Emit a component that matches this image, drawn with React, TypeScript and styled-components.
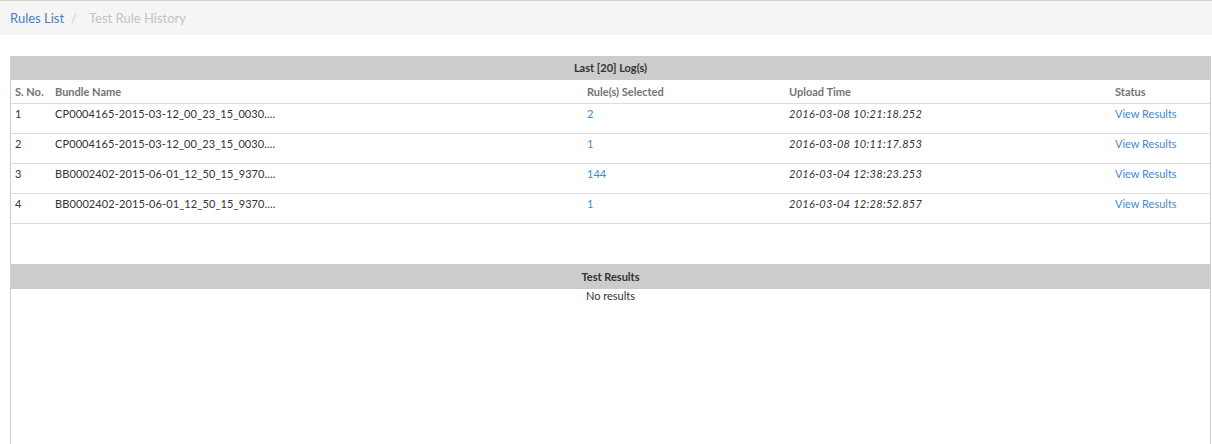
import React from "react";
import styled, { createGlobalStyle } from "styled-components";

const GlobalStyle = createGlobalStyle`
  html, body {
    margin: 0;
    padding: 0;
    background: #ffffff;
  }
  body {
    font-family: Lato, "Open Sans", "Liberation Sans", sans-serif;
    font-size: 11px;
    color: #333333;
  }
  * { box-sizing: border-box; }
`;

const Page = styled.div`
  display: flex;
  flex-direction: column;
`;

const Breadcrumb = styled.nav`
  display: flex;
  align-items: center;
  height: 35px;
  padding: 0 10px 1px;
  border-top: 1px solid #cfcfcf;
  background: #f5f5f5;
  font-size: 13px;
  line-height: 20px;
`;

const CrumbLink = styled.a`
  color: #4a7fc1;
  text-decoration: none;
`;

const CrumbSep = styled.span`
  color: #cccccc;
  margin: 0 12px 0 7px;
`;

const CrumbActive = styled.span`
  color: #c4c4c4;
`;

const Content = styled.main`
  padding: 21px 1px 0 10px;
`;

const Panel = styled.div`
  display: flex;
  flex-direction: column;
  min-height: 400px;
  border-left: 1px solid #cccccc;
  border-right: 1px solid #cccccc;
`;

const Bar = styled.div<{ $h: number }>`
  height: ${(p) => p.$h}px;
  line-height: ${(p) => p.$h}px;
  background: #cccccc;
  color: #333333;
  font-weight: 700;
  text-align: center;
`;

const Row = styled.div<{ $head?: boolean }>`
  display: grid;
  grid-template-columns: 40px 532px 202px 326px 1fr;
  height: ${(p) => (p.$head ? 24 : 30)}px;
  align-items: ${(p) => (p.$head ? "center" : "start")};
  padding-top: ${(p) => (p.$head ? 0 : 2)}px;
  border-bottom: 1px solid #dddddd;
  line-height: 16px;
`;

const HeadCell = styled.div`
  padding-left: 4px;
  color: #737373;
  font-weight: 700;
`;

const Cell = styled.div<{ $kind?: "name" | "time" | "link" }>`
  padding-left: 4px;
  white-space: nowrap;
  color: ${(p) => (p.$kind === "link" ? "#3f8ad0" : "#333333")};
  font-style: ${(p) => (p.$kind === "time" ? "italic" : "normal")};
  letter-spacing: ${(p) =>
    p.$kind === "name" ? "0.1px" : p.$kind === "time" ? "0.3px" : "0"};
`;

const Spacer = styled.div`
  height: 40px;
`;

const Empty = styled.div`
  text-align: center;
  line-height: 13px;
  color: #333333;
`;

const logs = [
  { no: 1, name: "CP0004165-2015-03-12_00_23_15_0030....", rules: "2", time: "2016-03-08 10:21:18.252" },
  { no: 2, name: "CP0004165-2015-03-12_00_23_15_0030....", rules: "1", time: "2016-03-08 10:11:17.853" },
  { no: 3, name: "BB0002402-2015-06-01_12_50_15_9370....", rules: "144", time: "2016-03-04 12:38:23.253" },
  { no: 4, name: "BB0002402-2015-06-01_12_50_15_9370....", rules: "1", time: "2016-03-04 12:28:52.857" },
];

export default function App() {
  return (
    <Page>
      <GlobalStyle />
      <Breadcrumb>
        <CrumbLink href="#">Rules List</CrumbLink>
        <CrumbSep>/</CrumbSep>
        <CrumbActive>Test Rule History</CrumbActive>
      </Breadcrumb>
      <Content>
        <Panel>
          <Bar $h={24}>Last [20] Log(s)</Bar>
          <Row $head>
            <HeadCell>S. No.</HeadCell>
            <HeadCell>Bundle Name</HeadCell>
            <HeadCell>Rule(s) Selected</HeadCell>
            <HeadCell>Upload Time</HeadCell>
            <HeadCell>Status</HeadCell>
          </Row>
          {logs.map((l) => (
            <Row key={l.no}>
              <Cell>{l.no}</Cell>
              <Cell $kind="name">{l.name}</Cell>
              <Cell $kind="link">{l.rules}</Cell>
              <Cell $kind="time">{l.time}</Cell>
              <Cell $kind="link">View Results</Cell>
            </Row>
          ))}
          <Spacer />
          <Bar $h={25}>Test Results</Bar>
          <Empty>No results</Empty>
        </Panel>
      </Content>
    </Page>
  );
}
